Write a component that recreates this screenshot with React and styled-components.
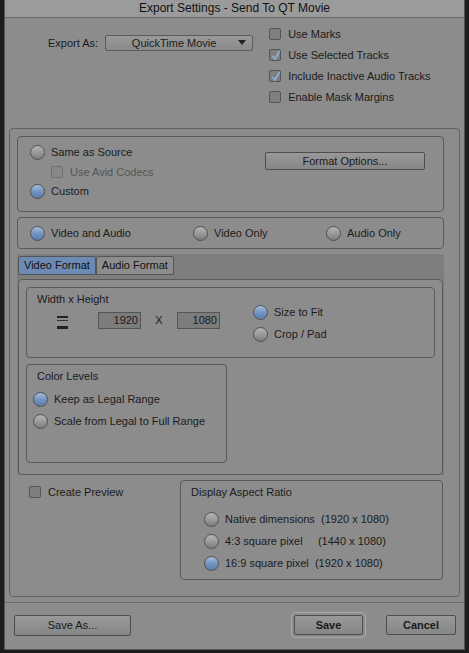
import React from "react";
import styled, { createGlobalStyle } from "styled-components";

const G = createGlobalStyle`
  html,body{margin:0;padding:0;background:#1c1c1c;}
  body{font-family:"Liberation Sans",Arial,sans-serif;font-size:11px;color:#1b1b1b;}
`;
const Win = styled.div`
  margin:0 4px; width:461px; height:650px; background:#8c8c8c;
  border:1px solid #555; border-top:none; box-sizing:border-box;
  display:flex; flex-direction:column;
`;
const Title = styled.div`
  height:17px; background:#9b9b9b; border-bottom:1px solid #6a6a6a;
  text-align:center; font-size:12px; line-height:17px; color:#111;
`;
const Top = styled.div`
  height:110px; display:flex; padding:9px 0 0 43px; box-sizing:border-box; gap:16px;
`;
const Label = styled.span`font-size:11px;`;
const ExportRow = styled.div`display:flex; align-items:center; gap:7px; height:16px; margin-top:8px;`;
const Select = styled.div`
  width:148px; height:16px; box-sizing:border-box; border:1px solid #5c5c5c; border-radius:2px;
  background:linear-gradient(#9a9a9a,#8a8a8a); position:relative; text-align:center; line-height:14px; padding-right:10px;
  &:after{content:"";position:absolute;right:6px;top:4px;border:4px solid transparent;border-top:5px solid #222;border-bottom:none;}
`;
const Checks = styled.div`display:flex; flex-direction:column; gap:8px;`;
const CheckRow = styled.label`
  display:flex; align-items:center; gap:7px; height:13px; color:${p=>p.$dis?"#555":"#1b1b1b"};
`;
const Box = styled.span`
  width:12px; height:12px; box-sizing:border-box; border:1px solid ${p=>p.$dis?"#6f6f6f":"#555"}; border-radius:2px;
  background:${p=>p.$dis?"#888":"#7f7f7f"}; position:relative; display:flex;
  svg{position:absolute;left:1px;top:0;}
`;
const Main = styled.div`
  margin:0 4px; height:469px; border:1px solid #626262; border-radius:4px; box-sizing:border-box;
  padding:7px 15px 0 7px; display:flex; flex-direction:column; gap:5px;
`;
const Group = styled.div`
  border:1px solid #5a5a5a; border-radius:4px; box-sizing:border-box; height:${p=>p.$h}px;
  width:${p=>p.$w?p.$w+"px":"auto"}; flex:none; position:relative;
`;
const Radio = styled.span`
  width:15px; height:15px; border-radius:50%; box-sizing:border-box; border:1px solid #505050; flex:none;
  background:${p=>p.$on?"linear-gradient(#a6bcd8,#7495c2 50%,#5a7cab)":"linear-gradient(#b5b5b5,#9a9a9a 50%,#7a7a7a)"};
`;
const RRow = styled.div`display:flex; align-items:center; gap:6px; height:16px; width:${p=>p.$w?p.$w+"px":"auto"};`;
const Btn = styled.div`
  border:1px solid #4e4e4e; border-radius:2px; background:linear-gradient(#999,#868686);
  height:${p=>p.$h||18}px; width:${p=>p.$w}px; box-sizing:border-box; text-align:center;
  line-height:${p=>(p.$h||18)-2}px; font-weight:${p=>p.$b?"bold":"normal"};
  ${p=>p.$focus?"box-shadow:0 0 0 2px #8c8c8c,0 0 0 3px #aaa;":""}
`;
const Source = styled.div`display:flex; justify-content:space-between; padding:7px 18px 0 12px;`;
const Col = styled.div`display:flex; flex-direction:column; gap:${p=>p.$g||5}px; padding:${p=>p.$p||0};`;
const Indent = styled.div`padding-left:21px;`;
const BtnWrap = styled.div`padding-top:8px;`;
const Trio = styled.div`display:flex; align-items:center; height:100%; padding-left:12px;`;
const Tabs = styled.div`background:#7e7e7e; height:221px; display:flex; flex-direction:column;`;
const TabBar = styled.div`display:flex; padding:2px 0 0 1px; height:19px;`;
const Tab = styled.div`
  height:17px; padding:0 5px; border:1px solid #555; border-radius:2px 2px 0 0; line-height:16px;
  background:${p=>p.$on?"#6c8ab3":"#8d8d8d"}; color:#111;
`;
const TabBody = styled.div`
  margin:4px 1px 0 1px; height:199px; background:#8c8c8c; border:1px solid #5a5a5a; border-radius:4px;
  box-sizing:border-box; padding:7px 7px 0 7px; display:flex; flex-direction:column; gap:6px;
`;
const GTitle = styled.div`padding:5px 0 0 10px; height:13px;`;
const WHRow = styled.div`display:flex; align-items:flex-start; padding:0 0 0 30px;`;
const Gap = styled.div`width:${p=>p.$w}px;`;
const FieldWrap = styled.div`margin-top:6px;`;
const Times = styled.div`width:36px; text-align:center; margin-top:8px;`;
const Field = styled.div`
  width:43px; height:17px; box-sizing:border-box; border:1px solid #555; background:#7c7c7c;
  text-align:right; padding-right:2px; line-height:15px; font-size:11px;
`;
const Eq = styled.div`
  width:11px; height:8px; border-top:2px solid #222; border-bottom:3px solid #222; position:relative; margin-top:10px;
  &:after{content:"";position:absolute;left:0;right:0;top:2px;height:1px;background:#333;}
`;
const FitCol = styled(Col)`margin-left:33px; margin-top:-2px;`;
const Bottom = styled.div`display:flex; justify-content:space-between; padding-left:12px; padding-right:1px;`;
const PreviewRow = styled(CheckRow)`margin-top:5px;`;
const Footer = styled.div`
  margin-top:5px; border-top:1px solid #6c6c6c; flex:1; display:flex; align-items:center;
  padding:2px 8px 4px 9px; gap:9px;
`;
const Spacer = styled.div`flex:1;`;

const Tick = () => (
  <svg width="10" height="11" viewBox="0 0 10 11"><path d="M1.5 6 L4 9 L8.5 1" fill="none" stroke="#8fb0e0" strokeWidth="1.6"/></svg>
);

export default function App(){
  return <><G/><Win>
    <Title>Export Settings - Send To QT Movie</Title>
    <Top>
      <ExportRow><Label>Export As:</Label><Select>QuickTime Movie</Select></ExportRow>
      <Checks>
        <CheckRow><Box/>Use Marks</CheckRow>
        <CheckRow><Box><Tick/></Box>Use Selected Tracks</CheckRow>
        <CheckRow><Box><Tick/></Box>Include Inactive Audio Tracks</CheckRow>
        <CheckRow><Box/>Enable Mask Margins</CheckRow>
      </Checks>
    </Top>
    <Main>
      <Group $h={76}>
        <Source>
          <Col $g={5}>
            <RRow><Radio/>Same as Source</RRow>
            <Indent><CheckRow $dis><Box $dis/>Use Avid Codecs</CheckRow></Indent>
            <RRow><Radio $on/>Custom</RRow>
          </Col>
          <BtnWrap><Btn $w={160}>Format Options...</Btn></BtnWrap>
        </Source>
      </Group>
      <Group $h={32}>
        <Trio>
          <RRow $w={163}><Radio $on/>Video and Audio</RRow>
          <RRow $w={133}><Radio/>Video Only</RRow>
          <RRow><Radio/>Audio Only</RRow>
        </Trio>
      </Group>
      <Tabs>
        <TabBar><Tab $on>Video Format</Tab><Tab>Audio Format</Tab></TabBar>
        <TabBody>
          <Group $h={71}>
            <GTitle>Width x Height</GTitle>
            <WHRow>
              <Eq/>
              <Gap $w={30}/>
              <FieldWrap><Field>1920</Field></FieldWrap>
              <Times>X</Times>
              <FieldWrap><Field>1080</Field></FieldWrap>
              <FitCol $g={6}>
                <RRow><Radio $on/>Size to Fit</RRow>
                <RRow><Radio/>Crop / Pad</RRow>
              </FitCol>
            </WHRow>
          </Group>
          <Group $h={99} $w={201}>
            <GTitle>Color Levels</GTitle>
            <Col $g={6} $p="8px 0 0 6px">
              <RRow><Radio $on/>Keep as Legal Range</RRow>
              <RRow><Radio/>Scale from Legal to Full Range</RRow>
            </Col>
          </Group>
        </TabBody>
      </Tabs>
      <Bottom>
        <PreviewRow><Box/>Create Preview</PreviewRow>
        <Group $h={100} $w={263}>
          <GTitle>Display Aspect Ratio</GTitle>
          <Col $g={6} $p="12px 0 0 23px">
            <RRow><Radio/>Native dimensions&nbsp; (1920 x 1080)</RRow>
            <RRow><Radio/>4:3 square pixel&nbsp;&nbsp;&nbsp;&nbsp; (1440 x 1080)</RRow>
            <RRow><Radio $on/>16:9 square pixel&nbsp; (1920 x 1080)</RRow>
          </Col>
        </Group>
      </Bottom>
    </Main>
    <Footer>
      <Btn $w={117} $h={21}>Save As...</Btn>
      <Spacer/>
      <Btn $w={69} $h={20} $b $focus>Save</Btn>
      <Gap $w={5}/>
      <Btn $w={70} $h={20} $b>Cancel</Btn>
    </Footer>
  </Win></>;
}
